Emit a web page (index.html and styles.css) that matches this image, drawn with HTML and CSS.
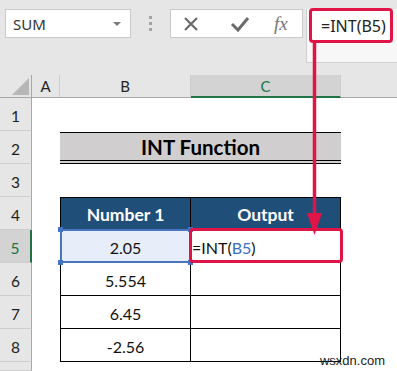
FILE: index.html
```html
<!DOCTYPE html>
<html>
  <head>
    <title>INT Function</title>
    <link rel="stylesheet" href="styles.css">
  </head>
  <body>
    <div class="app">
      <div class="toolbar">
        <div class="namebox">SUM<span class="caret"></span></div>
        <div class="grip"><i></i><i></i><i></i></div>
        <div class="fxbuttons">
          <svg class="ico" width="18" height="18" viewBox="0 0 18 18"><path d="M3 3 L15 15 M15 3 L3 15" stroke="#6b6b6b" stroke-width="2.2" fill="none"/></svg>
          <svg class="ico" width="20" height="18" viewBox="0 0 20 18"><path d="M2 9 L8 15 L18 3" stroke="#6b6b6b" stroke-width="3" fill="none"/></svg>
          <span class="fx">fx</span>
        </div>
        <div class="formula">
          <div class="callout">=INT(B5)</div>
        </div>
      </div>

      <div class="sheet">
        <div class="corner"><span class="tri"></span></div>
        <div class="colhead">A</div>
        <div class="colhead">B</div>
        <div class="colhead active">C</div>
        <div class="colhead last"></div>

        <div class="rowhead">1</div><div></div><div></div><div></div><div></div>

        <div class="rowhead">2</div><div></div>
        <div class="title">INT Function</div><div></div>

        <div class="rowhead">3</div><div></div><div></div><div></div><div></div>

        <div class="rowhead">4</div><div></div>
        <div class="th colb">Number 1</div>
        <div class="th colc">Output</div><div></div>

        <div class="rowhead active">5</div><div></div>
        <div class="td colb sel">2.05<span class="h tl"></span><span class="h tr"></span><span class="h bl"></span><span class="h br"></span></div>
        <div class="td colc edit">=INT(<span class="ref">B5</span>)</div><div></div>

        <div class="rowhead">6</div><div></div>
        <div class="td colb">5.554</div>
        <div class="td colc"></div><div></div>

        <div class="rowhead">7</div><div></div>
        <div class="td colb">6.45</div>
        <div class="td colc"></div><div></div>

        <div class="rowhead">8</div><div></div>
        <div class="td colb">-2.56</div>
        <div class="td colc"></div><div></div>

        <div class="rowhead"></div><div></div><div></div><div></div><div></div>
      </div>

      <svg class="arrow" width="397" height="371" viewBox="0 0 397 371">
        <line x1="314.5" y1="43" x2="314.5" y2="222" stroke="#df1547" stroke-width="3.5"/>
        <polygon points="307,213 322,213 314.5,235" fill="#df1547"/>
      </svg>
      <div class="mark">wsxdn.com</div>
    </div>
  </body>
</html>
```
FILE: styles.css
```css
body {
  margin: 0;
  background: #fff;
}
.app {
  position: relative;
  width: 397px;
  height: 371px;
  overflow: hidden;
  font-family: Lato, "Liberation Sans", sans-serif;
  color: #111;
}

/* formula bar */
.toolbar {
  height: 75px;
  box-sizing: border-box;
  background: #e6e6e6;
  display: flex;
  align-items: flex-start;
  padding-top: 9px;
}
.namebox {
  margin-left: 5px;
  width: 126px;
  height: 29px;
  box-sizing: border-box;
  background: #fff;
  border: 1px solid #c9c9c9;
  display: flex;
  align-items: center;
  justify-content: space-between;
  padding: 0 9px 0 7px;
  font: 15px "Noto Sans", sans-serif;
  color: #333;
}
.caret {
  width: 0;
  height: 0;
  border-left: 4px solid transparent;
  border-right: 4px solid transparent;
  border-top: 4px solid #7a7a7a;
}
.grip {
  width: 39px;
  height: 29px;
  display: flex;
  flex-direction: column;
  align-items: center;
  justify-content: center;
  gap: 3px;
}
.grip i {
  width: 3px;
  height: 3px;
  background: #a3a3a3;
}
.fxbuttons {
  width: 133px;
  height: 29px;
  box-sizing: border-box;
  background: #fff;
  border: 1px solid #c9c9c9;
  display: flex;
  align-items: center;
  padding-left: 11px;
  gap: 30px;
}
.fx {
  font: italic 19px "Liberation Serif", serif;
  color: #757575;
  margin-left: -6px;
}
.formula {
  margin-left: 3px;
  flex: 1;
  height: 53px;
  background: #f7f7f7;
  border-left: 1px solid #d0d0d0;
  border-bottom: 1px solid #cfcfcf;
}
.callout {
  margin: -1px 0 0 2px;
  width: 84px;
  height: 35px;
  box-sizing: border-box;
  border: 3px solid #df1547;
  border-radius: 4px;
  background: #fff;
  font: 16px "Noto Sans", sans-serif;
  color: #222;
  display: flex;
  align-items: center;
  padding-left: 9px;
}

/* sheet */
.sheet {
  display: grid;
  grid-template-columns: 32px 28px 131px 150px 1fr;
  grid-template-rows: 23px repeat(8, 33px) 1fr;
  height: 296px;
  font-size: 16px;
}
.corner, .colhead {
  background: #e6e6e6;
  border-bottom: 1px solid #a8a8a8;
  display: flex;
  align-items: center;
  justify-content: center;
  font-size: 15px;
  color: #222;
}
.corner {
  border-right: 1px solid #a8a8a8;
  justify-content: flex-end;
  align-items: flex-end;
  padding: 0 2px 2px 0;
}
.tri {
  width: 0;
  height: 0;
  border-left: 17px solid transparent;
  border-bottom: 17px solid #b7b7b7;
}
.colhead {
  border-right: 1px solid #cdcdcd;
}
.colhead.active {
  background: #d3d3d3;
  border-bottom: 2px solid #217346;
  color: #217346;
}
.colhead.last {
  border-right: none;
}
.rowhead {
  background: #e6e6e6;
  border-right: 1px solid #a8a8a8;
  border-bottom: 1px solid #cdcdcd;
  display: flex;
  align-items: center;
  justify-content: center;
  padding-top: 3px;
  font-size: 15.5px;
  color: #222;
}
.rowhead.active {
  background: #d3d3d3;
  border-right: 2px solid #217346;
  color: #217346;
}

.title {
  grid-column: span 2;
  background: #d0cece;
  border-top: 1px solid #000;
  border-bottom: 4px double #000;
  margin-top: 1px;
  display: flex;
  align-items: center;
  justify-content: center;
  font-weight: 700;
  font-size: 20.5px;
  color: #000;
}
.th, .td {
  display: flex;
  align-items: center;
  justify-content: center;
  border-bottom: 1px solid #000;
  border-right: 1px solid #000;
}
.colb {
  border-left: 1px solid #000;
}
.th {
  background: #1f4e78;
  color: #fff;
  font-weight: 700;
  font-size: 17.5px;
  border-top: 1px solid #000;
  padding-top: 2px;
}
.td {
  color: #111;
  padding-top: 2px;
}
.sel {
  position: relative;
  background: #e8eef9;
}
.sel::before {
  content: "";
  position: absolute;
  inset: -1px -1px -1px -1px;
  border: 2px solid #4a74bd;
}
.h {
  position: absolute;
  width: 5px;
  height: 5px;
  background: #4472c4;
}
.tl { top: -3px; left: -3px; }
.tr { top: -3px; right: -3px; }
.bl { bottom: -3px; left: -3px; }
.br { bottom: -3px; right: -3px; }

.edit {
  position: relative;
  justify-content: flex-start;
  padding-left: 1px;
  font-size: 16px;
  color: #111;
}
.edit::after {
  content: "";
  position: absolute;
  inset: -2px -3px -1px -2px;
  border: 3px solid #df1547;
  border-radius: 4px;
}
.ref {
  color: #3b6ec2;
}

.arrow {
  position: absolute;
  left: 0;
  top: 0;
  pointer-events: none;
}
.mark {
  position: absolute;
  right: 12px;
  bottom: 3px;
  font: 13px "Liberation Sans", sans-serif;
  color: #222;
}
```
